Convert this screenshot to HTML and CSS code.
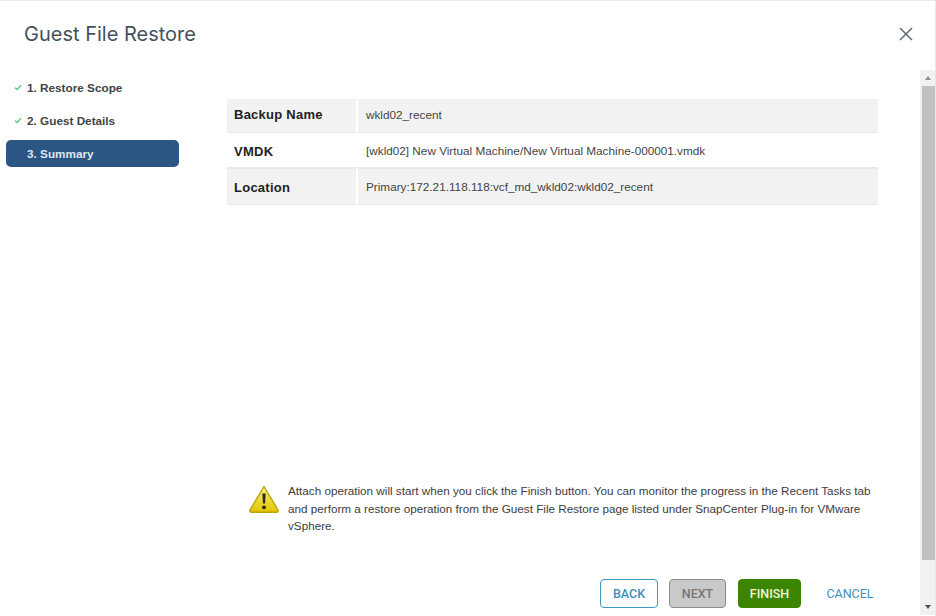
FILE: index.html
```html
<!DOCTYPE html>
<html lang="en">
<head>
<meta charset="utf-8">
<title>Guest File Restore</title>
<link rel="stylesheet" href="styles.css">
</head>
<body>
<div class="dialog">
  <header class="head">
    <h1 class="title">Guest File Restore</h1>
    <svg class="close" width="14" height="14" viewBox="0 0 14 14"><path d="M1 1l12 12M13 1L1 13" fill="none" stroke="#5f6b76" stroke-width="1.5"/></svg>
  </header>
  <div class="main">
    <nav class="steps">
      <div class="step"><svg class="check" width="8" height="7" viewBox="0 0 8 7"><path d="M1 3.6l2 2L7 1.2" fill="none" stroke="#4fc07f" stroke-width="1.3"/></svg><span>1. Restore Scope</span></div>
      <div class="step"><svg class="check" width="8" height="7" viewBox="0 0 8 7"><path d="M1 3.6l2 2L7 1.2" fill="none" stroke="#4fc07f" stroke-width="1.3"/></svg><span>2. Guest Details</span></div>
      <div class="step active"><span>3. Summary</span></div>
    </nav>
    <section class="content">
      <div class="table">
        <div class="cell label shaded r1">Backup Name</div>
        <div class="cell shaded r1">wkld02_recent</div>
        <div class="cell label r2">VMDK</div>
        <div class="cell r2">[wkld02] New Virtual Machine/New Virtual Machine-000001.vmdk</div>
        <div class="cell label shaded r3">Location</div>
        <div class="cell shaded r3">Primary:172.21.118.118:vcf_md_wkld02:wkld02_recent</div>
      </div>
      <div class="notice">
        <svg class="warn" width="32" height="30" viewBox="0 0 32 30">
          <defs><linearGradient id="y" x1="0" y1="0" x2="0" y2="1"><stop offset="0" stop-color="#fff27a"/><stop offset="1" stop-color="#e0c400"/></linearGradient></defs>
          <path d="M16 2.5L30 26a1.6 1.6 0 0 1-1.4 2.3H3.4A1.6 1.6 0 0 1 2 26z" fill="url(#y)" stroke="#b9a200" stroke-width="1.4" stroke-linejoin="round"/>
          <path d="M14.3 9.5h3.4l-.7 10h-2z" fill="#2a2a20"/>
          <circle cx="16" cy="23.3" r="1.9" fill="#2a2a20"/>
        </svg>
        <p class="msg">Attach operation will start when you click the Finish button. You can monitor the progress in the Recent Tasks tab and perform a restore operation from the Guest File Restore page listed under SnapCenter Plug-in for VMware vSphere.</p>
      </div>
      <div class="actions">
        <button class="btn back">BACK</button>
        <button class="btn next">NEXT</button>
        <button class="btn finish">FINISH</button>
        <button class="btn cancel">CANCEL</button>
      </div>
    </section>
    <div class="scrollbar">
      <div class="arrow up"></div>
      <div class="thumb"></div>
      <div class="arrow down"></div>
    </div>
  </div>
</div>
</body>
</html>
```
FILE: styles.css
```css
* { box-sizing: border-box; }
html, body { margin: 0; padding: 0; }
body { width: 936px; height: 616px; overflow: hidden; background: #fff; font-family: "Liberation Sans", Arial, sans-serif; }
.dialog { width: 936px; height: 616px; border-top: 1px solid #e8e8e8; border-right: 1px solid #e8e8e8; display: flex; flex-direction: column; }
.head { height: 68px; flex: none; display: flex; align-items: flex-start; justify-content: space-between; padding: 20px 22px 0 24px; }
.title { margin: 1px 0 0; font-family: "Inter", sans-serif; font-size: 20px; font-weight: 400; line-height: 24px; color: #45525c; letter-spacing: 0; }
.close { margin-top: 6px; }
.main { flex: 1; display: flex; min-height: 0; }
.steps { width: 227px; flex: none; padding: 5px 48px 0 6px; display: flex; flex-direction: column; gap: 6px; }
.step { height: 27px; border-radius: 5px; display: flex; align-items: center; padding-left: 8px; gap: 5px; font-size: 11.75px; font-weight: 700; color: #444; }
.step.active { background: #2b5582; color: #dfe8f2; padding-left: 21px; }
.content { flex: 1; padding: 30px 40px 0 0; display: flex; flex-direction: column; min-width: 0; }
.table { display: grid; grid-template-columns: 129px 520px; column-gap: 2px; grid-template-rows: 34px 36px 36px; }
.cell { display: flex; align-items: center; padding: 0 0 2px 8px; font-size: 11.75px; color: #444; border-bottom: 1px solid #e4e9ec; }
.cell.r2 { border-bottom: 2px solid #e4e9ec; padding-top: 0; padding-bottom: 0; }
.cell.r3 { padding-top: 0; padding-bottom: 0; }
.cell.label.r2, .cell.label.r3 { padding-top: 2px; }
.shaded { background: #f2f2f2; }
.label { font-size: 13px; font-weight: 700; color: #222; padding-left: 7px; letter-spacing: .25px; }
.notice { margin-top: 277px; display: flex; padding-left: 21px; gap: 8px; }
.warn { flex: none; margin-top: 2px; }
.msg { margin: 0; width: 590px; font-size: 11.7px; line-height: 17.5px; color: #3d3d3d; }
.actions { margin-top: 44.5px; display: flex; justify-content: flex-end; align-items: center; gap: 11px; }
.btn { height: 29px; font-family: "Roboto", sans-serif; font-size: 12.5px; font-weight: 500; border-radius: 4px; padding: 0; border: 1.5px solid transparent; background: none; }
.back { width: 58px; border-color: #3f97c4; color: #3f8fba; background: #fff; }
.next { width: 57px; border-color: #8c8c8c; background: #c9c9c9; color: #777; }
.finish { width: 63px; margin-left: 1px; background: #3c8500; color: #eef5d8; border-color: #3c8500; }
.cancel { width: 60px; color: #3f8fba; margin-left: 8px; font-weight: 400; }
.scrollbar { width: 15px; flex: none; margin-top: 1px; margin-bottom: 1px; background: #f1f1f1; display: flex; flex-direction: column; }
.arrow { height: 16px; flex: none; display: flex; align-items: center; justify-content: center; }
.arrow::before { content: ""; border-left: 3.5px solid transparent; border-right: 3.5px solid transparent; }
.up::before { border-bottom: 4px solid #8f8f8f; }
.down::before { border-top: 4px solid #505050; }
.thumb { height: 474px; background: #c1c1c1; margin-left: 2px; }
.down { margin-top: auto; }
```
